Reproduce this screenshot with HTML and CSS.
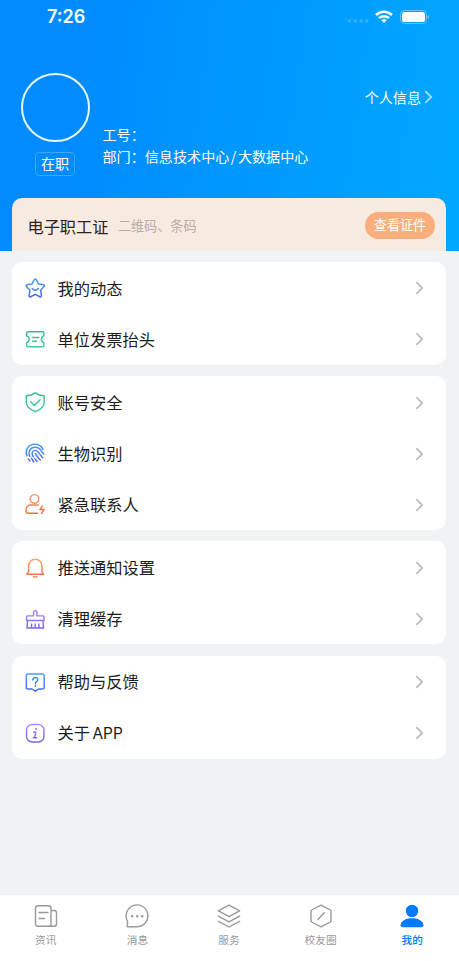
FILE: index.html
```html
<!DOCTYPE html>
<html lang="zh-CN">
<head>
<meta charset="utf-8">
<meta name="viewport" content="width=device-width, initial-scale=1">
<title>我的</title>
<link rel="stylesheet" href="styles.css">
</head>
<body>
<svg class="defs" aria-hidden="true">
  <defs>
    <linearGradient id="blue" gradientUnits="userSpaceOnUse" x1="0" y1="1" x2="0" y2="19"><stop offset="0" stop-color="#48a0f8"/><stop offset="1" stop-color="#4360ee"/></linearGradient>
    <linearGradient id="green" gradientUnits="userSpaceOnUse" x1="0" y1="1" x2="0" y2="19"><stop offset="0" stop-color="#35bd82"/><stop offset="1" stop-color="#3ccda0"/></linearGradient>
    <linearGradient id="orange" gradientUnits="userSpaceOnUse" x1="0" y1="1" x2="0" y2="19"><stop offset="0" stop-color="#f5a06a"/><stop offset="1" stop-color="#ef6c3f"/></linearGradient>
    <linearGradient id="purple" gradientUnits="userSpaceOnUse" x1="0" y1="1" x2="0" y2="19"><stop offset="0" stop-color="#b08af0"/><stop offset="1" stop-color="#7a62e8"/></linearGradient>
    <symbol id="chevron" viewBox="0 0 9 14"><path d="M1.3 1.200 7.200 7l-5.900 5.800"/></symbol>
  </defs>
</svg>
<div class="app">
  <header class="hero">
    <div class="status">
      <span class="time">7:26</span>
      <div class="signals">
        <svg class="cell" viewBox="0 0 22 6"><circle cx="2.500" cy="3" r="1.800"/><circle cx="8.300" cy="3" r="1.800"/><circle cx="14.100" cy="3" r="1.800"/><circle cx="19.900" cy="3" r="1.800"/></svg>
        <svg class="wifi" viewBox="0 0 18 13"><g fill="none" stroke="#fff" stroke-width="2.500"><path d="M1 5a11.500 11.500 0 0 1 16 0"/><path d="M4 8.200a7.200 7.200 0 0 1 10 0"/></g><path d="M9 12.900 6.300 10.200a3.900 3.900 0 0 1 5.400 0z" fill="#fff"/></svg>
        <svg class="battery" viewBox="0 0 29 14"><rect x=".5" y=".5" width="26" height="13" rx="4" fill="none" stroke="#65c3ff"/><rect x="2" y="2" width="23" height="10" rx="2.800" fill="#fff"/><path d="M27.700 5v4q1.200-.7 1.200-2t-1.200-2" fill="#8fd2ff"/></svg>
      </div>
    </div>
    <div class="profile">
      <div class="avatar-col">
        <div class="avatar"></div>
        <span class="tag">在职</span>
      </div>
      <div class="details">
        <p>工号：</p>
        <p>部门：信息技术中心<span class="slash">/</span>大数据中心</p>
      </div>
      <a class="info-link">个人信息<svg class="chev"><use href="#chevron"/></svg></a>
    </div>
    <div class="pass">
      <strong>电子职工证</strong>
      <span class="hint">二维码、条码</span>
      <span class="pass-btn">查看证件</span>
    </div>
  </header>

  <main class="menu">
    <section class="card">
      <div class="row">
        <svg class="icon blue" viewBox="0 0 20 20"><path d="M10 .9q.7 0 1 .7l2.100 4.200 4.900.8q1.700.4.600 1.800l-3.400 3.500.8 5.300q.1 1.700-1.500 1.100L10 16l-4.500 2.300q-1.600.6-1.500-1.100l.8-5.300L1.400 8.400Q.3 7 2 6.600l4.900-.8L9 1.600q.3-.7 1-.7z"/><path d="M7 10.200q3 3.600 6 0"/></svg>
        <span>我的动态</span><svg class="chev"><use href="#chevron"/></svg>
      </div>
      <div class="row">
        <svg class="icon green" viewBox="0 0 20 20"><path d="M2.800 2.700h14.400q1.200 0 1.200 1.200v2.700a3.600 3.600 0 0 0 0 6.800v2.700q0 1.200-1.200 1.200H2.800q-1.200 0-1.200-1.200v-2.700a3.600 3.600 0 0 0 0-6.800V3.900q0-1.200 1.200-1.200zM7.300 8.300h6M7.300 12h4"/></svg>
        <span>单位发票抬头</span><svg class="chev"><use href="#chevron"/></svg>
      </div>
    </section>
    <section class="card">
      <div class="row">
        <svg class="icon green" viewBox="0 0 20 20"><path d="M10 .8c2.600 1.900 5 2.600 8.700 2.900v6.400c0 4.200-3.600 7.200-8.700 9.200-5.100-2-8.700-5-8.700-9.200V3.700C5 3.400 7.400 2.700 10 .8zM5.500 9.500l3.600 3.600 5.700-5.500"/></svg>
        <span>账号安全</span><svg class="chev"><use href="#chevron"/></svg>
      </div>
      <div class="row">
        <svg class="icon blue" viewBox="0 0 20 20"><path d="M1.900 12.500C-.3 6.200 3.800 1.200 9.600 1.200c3.700 0 6.600 1.800 8 5M3.300 15.500l1.500 2M4.700 13C2.500 8.500 5.400 4.200 9.700 4.200c3.700 0 5.700 2.200 6.900 4.600l1.600 2M6.300 15l2.200 3.300M8 13.300c-2-2.800-1-6.100 1.800-6.100 2.400 0 3.500 1.800 4.600 3.600l2.900 3.700M9.600 15.300l2.100 2.700M10.200 10.300c.9 2.100 2.600 4.400 4.700 6.300"/></svg>
        <span>生物识别</span><svg class="chev"><use href="#chevron"/></svg>
      </div>
      <div class="row">
        <svg class="icon orange" viewBox="0 0 20 20"><circle cx="9.200" cy="4.800" r="4.200"/><path d="M13 10.700H6q-5 0-5 5.300v1.100q0 1.700 1.600 1.700h9.600M17 11.700l-2.500 3.500h4.200l-2.500 3.700"/></svg>
        <span>紧急联系人</span><svg class="chev"><use href="#chevron"/></svg>
      </div>
    </section>
    <section class="card">
      <div class="row">
        <svg class="icon orange" viewBox="0 0 20 20"><path d="M3.500 13.500V7.800C3.500 4 6.300 1.300 10 1.300s6.500 2.700 6.500 6.500v5.700l1.600 2q.2.400-.4.400H2.300q-.6 0-.4-.4zM8.200 18.400h3.600"/></svg>
        <span>推送通知设置</span><svg class="chev"><use href="#chevron"/></svg>
      </div>
      <div class="row">
        <svg class="icon purple" viewBox="0 0 20 20"><path d="M8.400 6.700v-4q0-1 1-1h1.200q1 0 1 1v4h5.900q1 0 1 1v3.600h-17V7.700q0-1 1-1zM2.600 11.300l-.7 7.200h16.200l-.7-7.200M6.400 18.300v-3.700M10 18.300v-3.700M13.600 18.300v-3.700"/></svg>
        <span>清理缓存</span><svg class="chev"><use href="#chevron"/></svg>
      </div>
    </section>
    <section class="card">
      <div class="row">
        <svg class="icon blue" viewBox="0 0 20 20"><path d="M3 2h14q1.700 0 1.700 1.700v11.600q0 1.300-1.700 1.300h-3.800L10 18.700l-3.200-2.100H3q-1.700 0-1.700-1.300V3.700Q1.300 2 3 2z"/><path d="M7.700 7.800c0-3.200 4.800-3 4.800-.2 0 1.800-2.400 1.900-2.400 4M10.100 13.500v.4"/></svg>
        <span>帮助与反馈</span><svg class="chev"><use href="#chevron"/></svg>
      </div>
      <div class="row">
        <svg class="icon purple" viewBox="0 0 20 20"><rect x="1.500" y="1.500" width="17" height="17" rx="5.500"/><path d="M8.400 8.700h2.200l-1.300 5.600h2.100M8 14.300h1.300"/><path d="M10.900 5.600v.3" stroke-width="2"/></svg>
        <span>关于<span class="latin">APP</span></span><svg class="chev"><use href="#chevron"/></svg>
      </div>
    </section>
  </main>

  <nav class="tabs">
    <a class="tab"><svg viewBox="0 0 24 24"><path d="M4 1.700h10.500q2.500 0 2.500 2.500v18.100H4q-2.500 0-2.500-2.500V4.200Q1.500 1.700 4 1.700zM17 6.500h3q2.500 0 2.500 2.500v10.800q0 2.500-2.500 2.500h-3M5 8.500h9M5 14.500h5.500"/></svg>资讯</a>
    <a class="tab"><svg viewBox="0 0 24 24"><path d="M2.300 22.700h10.200A10.900 10.900 0 1 0 2.600 17.300z"/><path d="M7.200 12.300h.1M12.200 12.300h.1M17.200 12.300h.1" stroke-width="2.400"/></svg>消息</a>
    <a class="tab"><svg viewBox="0 0 24 24"><path d="M12 1.200 22.600 6.900 12 12.600 1.400 6.900zM1.400 12.100 12 17.800l10.600-5.700M1.400 17.300 12 23l10.600-5.700"/></svg>服务</a>
    <a class="tab"><svg viewBox="0 0 24 24"><path d="M12 1.200 21.300 6q.7.400.7 1.200v9.600q0 .8-.7 1.200L12 22.800 2.700 18q-.7-.4-.7-1.200V7.200Q2 6.400 2.700 6zM9 15.500l6.300-6.800"/></svg>校友圈</a>
    <a class="tab active"><svg viewBox="0 0 24 24"><circle cx="12" cy="7" r="6.200"/><path d="M.5 21.300C1 17 5.500 14.300 12 14.300S23 17 23.500 21.300Q23.500 23.300 21 23.300H3Q.5 23.300.5 21.300z"/></svg>我的</a>
  </nav>
</div>
</body>
</html>
```

FILE: styles.css
```css
* { box-sizing: border-box; }

body {
  margin: 0;
  background: #f0f2f4;
  font-family: "Noto Sans CJK SC", sans-serif;
  color: #1c1c1c;
}

p { margin: 0; }

.defs {
  display: block;
  width: 0;
  height: 0;
}

.app {
  display: flex;
  flex-direction: column;
  height: 961px;
}

.hero {
  display: flex;
  flex-direction: column;
  height: 251px;
  padding: 0 13px 0 12px;
  background: linear-gradient(98deg, #008cff 20%, #00a8ff 100%);
  color: #fff;
}

.status {
  display: flex;
  justify-content: space-between;
  align-items: center;
  height: 33px;
  padding: 0 17px 0 35px;
}

.time {
  font: 600 18px/22px Inter, sans-serif;
}

.signals {
  display: flex;
  align-items: center;
}

.cell {
  width: 22px;
  height: 6px;
  margin: 9px 6px 0 0;
  fill: #35b1ff;
}

.wifi {
  width: 18px;
  height: 13px;
  margin-right: 7px;
}

.battery {
  width: 29px;
  height: 14px;
}

.profile {
  display: flex;
  height: 164.5px;
  padding: 40px 0 0 9px;
  font-size: 14.1px;
  line-height: 22px;
}

.avatar-col {
  display: flex;
  flex-direction: column;
  align-items: center;
  width: 69px;
}

.avatar {
  width: 69px;
  height: 69px;
  border: 2px solid #e9f8ff;
  border-radius: 50%;
}

.tag {
  width: 40px;
  height: 24px;
  margin: 10px 1px 0 0;
  border: 1px solid #3aa9ff;
  border-radius: 4px;
  line-height: 21px;
  text-align: center;
}

.details {
  margin: 50px 0 0 12.5px;
}

.slash {
  margin: 0 1.5px;
}

.info-link {
  display: flex;
  align-items: center;
  height: 22px;
  margin: 13px 0 0 auto;
}

.chev {
  width: 9px;
  height: 14px;
  fill: none;
  stroke: #bcbec1;
  stroke-width: 1.8;
}

.info-link .chev {
  margin: 0 13px 0 3px;
  stroke: #a8dcff;
}

.pass {
  display: flex;
  align-items: center;
  height: 53.5px;
  padding: 3px 11px 0 15.5px;
  border-radius: 10px 10px 0 0;
  background: #f7eae0;
}

.pass strong {
  color: #2c2420;
  font-size: 16.2px;
  font-weight: 400;
}

.hint {
  margin-left: 9.5px;
  color: #b5aca5;
  font-size: 13.1px;
}

.pass-btn {
  width: 70px;
  height: 27px;
  margin-left: auto;
  border-radius: 14px;
  background: #f9ae7c;
  font-size: 13.1px;
  line-height: 26px;
  text-align: center;
}

.menu {
  display: flex;
  flex: 1;
  flex-direction: column;
  gap: 11.2px;
  padding: 11px 13px 0 12px;
}

.card {
  padding: 0.8px 22px 0 13px;
  border-radius: 10px;
  background: #fff;
}

.row {
  display: flex;
  align-items: center;
  height: 51.1px;
  font-size: 16.25px;
  line-height: 24px;
}

.row > span {
  flex: 1;
  margin: -1px 0 0 12px;
}

.latin {
  margin-left: 2.5px;
  font-family: Inter, sans-serif;
  font-size: 15.4px;
}

.icon {
  width: 20.5px;
  height: 20.5px;
  fill: none;
  stroke-width: 1.4;
  stroke-linecap: round;
  stroke-linejoin: round;
}

.blue { stroke: url(#blue); }
.green { stroke: url(#green); }
.orange { stroke: url(#orange); }
.purple { stroke: url(#purple); }

.tabs {
  display: flex;
  height: 66px;
  padding: 9px 1px 0 0;
  background: #fff;
}

.tab {
  display: flex;
  flex: 1;
  flex-direction: column;
  align-items: center;
  color: #999;
  font-size: 10.7px;
  line-height: 16px;
}

.tab svg {
  width: 24px;
  height: 24px;
  margin-bottom: 4px;
  fill: none;
  stroke: #999;
  stroke-width: 1.4;
  stroke-linejoin: round;
  stroke-linecap: round;
}

.tab.active {
  color: #007aff;
  font-weight: 500;
}

.tab.active svg {
  fill: #007aff;
  stroke: none;
}
```
